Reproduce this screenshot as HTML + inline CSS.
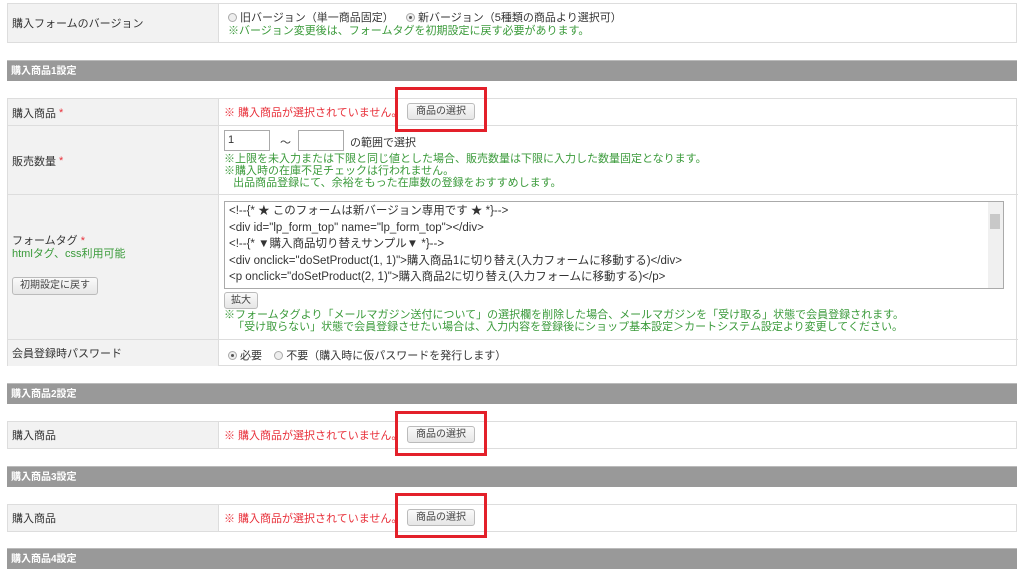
<!DOCTYPE html>
<html><head><meta charset="utf-8"><style>
*{margin:0;padding:0;box-sizing:border-box}
body{width:1024px;height:578px;background:#fff;font-family:"Liberation Sans","Noto Sans CJK JP",sans-serif;font-size:11px;color:#333;position:relative;overflow:hidden}
.a{position:absolute}
.row{position:absolute;left:7px;width:1010px;border:1px solid #ddd;background:#fff}
.lab{position:absolute;left:0;top:0;bottom:0;width:211px;background:#f2f2f2;border-right:1px solid #ddd;padding-left:4px;display:flex;align-items:center}
.sec{position:absolute;left:7px;width:1010px;height:21px;background:#999;color:#fff;font-weight:bold;font-size:10px;padding-left:4px;line-height:21px;border-top:1px solid #bbb}
.g{color:#3a9a3a}
.r{color:#e8303a}
.req{color:#e8303a}
.btn{position:absolute;border:1px solid #bbb;border-radius:3px;background:linear-gradient(#fafafa,#e6e6e6);font-size:10px;color:#444;text-align:center;line-height:15px}
.box{position:absolute;border:3px solid #e3202a}
.rad{display:inline-block;width:9px;height:9px;border:1px solid #aaa;border-radius:50%;background:#eee;vertical-align:-1px;margin-right:3px;position:relative}
.rad.on::after{content:"";position:absolute;left:2px;top:2px;width:3px;height:3px;border-radius:50%;background:#555}
.hl{position:absolute;left:0;width:1010px;height:1px;background:#ddd}
</style></head><body>

<div class="row" style="top:3px;height:40px"><div class="lab">購入フォームのバージョン</div>
<div class="a" style="left:220px;top:8px;line-height:13px"><span class="rad"></span>旧バージョン（単一商品固定）&nbsp;&nbsp;&nbsp;&nbsp;<span class="rad on"></span>新バージョン（5種類の商品より選択可）<br><span class="g">※バージョン変更後は、フォームタグを初期設定に戻す必要があります。</span></div></div>

<div class="sec" style="top:60px">購入商品1設定</div>

<div class="row" style="top:98px;height:268px">
<div class="lab" style="height:27px;bottom:auto;align-items:center">購入商品 <span class="req">&nbsp;*</span></div>
<div class="lab" style="top:27px;height:69px;bottom:auto">販売数量 <span class="req">&nbsp;*</span></div>
<div class="lab" style="top:96px;height:145px;bottom:auto;display:block;padding-top:40px;line-height:13px">フォームタグ <span class="req">*</span><br><span class="g">htmlタグ、css利用可能</span></div>
<div class="lab" style="top:241px;height:26px;bottom:auto">会員登録時パスワード</div>
<div class="hl" style="top:26px"></div><div class="hl" style="top:95px"></div><div class="hl" style="top:240px"></div>
<div class="btn" style="left:4px;top:178px;width:86px;height:18px">初期設定に戻す</div>
<div class="a r" style="left:216px;top:5px">※ 購入商品が選択されていません。</div>
<div class="btn" style="left:399px;top:4px;width:68px;height:17px">商品の選択</div>
<div class="a" style="left:216px;top:31px;width:46px;height:21px;border:1px solid #aaa;padding:0 3px;line-height:19px">1</div>
<div class="a" style="left:272px;top:35px">～</div>
<div class="a" style="left:290px;top:31px;width:46px;height:21px;border:1px solid #aaa"></div>
<div class="a" style="left:342px;top:35px">の範囲で選択</div>
<div class="a g" style="left:216px;top:54px;line-height:12px">※上限を未入力または下限と同じ値とした場合、販売数量は下限に入力した数量固定となります。<br>※購入時の在庫不足チェックは行われません。<br>&nbsp;&nbsp;&nbsp;出品商品登録にて、余裕をもった在庫数の登録をおすすめします。</div>
<div class="a" style="left:216px;top:102px;width:780px;height:88px;border:1px solid #aaa;padding:1px 4px;line-height:16.6px;font-size:11.5px;overflow:hidden;white-space:nowrap">&lt;!--{* ★ このフォームは新バージョン専用です ★ *}--&gt;<br>&lt;div id="lp_form_top" name="lp_form_top"&gt;&lt;/div&gt;<br>&lt;!--{* ▼購入商品切り替えサンプル▼ *}--&gt;<br>&lt;div onclick="doSetProduct(1, 1)"&gt;購入商品1に切り替え(入力フォームに移動する)&lt;/div&gt;<br>&lt;p onclick="doSetProduct(2, 1)"&gt;購入商品2に切り替え(入力フォームに移動する)&lt;/p&gt;
<div class="a" style="right:0;top:0;width:15px;height:86px;background:#f0f0f0"><div class="a" style="left:2px;top:12px;width:10px;height:15px;background:#c8c8c8"></div></div></div>
<div class="btn" style="left:216px;top:193px;width:34px;height:17px">拡大</div>
<div class="a g" style="left:216px;top:210px;line-height:12px">※フォームタグより「メールマガジン送付について」の選択欄を削除した場合、メールマガジンを「受け取る」状態で会員登録されます。<br>&nbsp;&nbsp;&nbsp;「受け取らない」状態で会員登録させたい場合は、入力内容を登録後にショップ基本設定＞カートシステム設定より変更してください。</div>
<div class="a" style="left:220px;top:248px"><span class="rad on"></span>必要&nbsp;&nbsp;&nbsp;&nbsp;<span class="rad"></span>不要（購入時に仮パスワードを発行します）</div>
</div>

<div class="sec" style="top:383px">購入商品2設定</div>
<div class="row" style="top:421px;height:28px"><div class="lab">購入商品</div>
<div class="a r" style="left:216px;top:5px">※ 購入商品が選択されていません。</div>
<div class="btn" style="left:399px;top:4px;width:68px;height:17px">商品の選択</div></div>

<div class="sec" style="top:466px">購入商品3設定</div>
<div class="row" style="top:504px;height:28px"><div class="lab">購入商品</div>
<div class="a r" style="left:216px;top:5px">※ 購入商品が選択されていません。</div>
<div class="btn" style="left:399px;top:4px;width:68px;height:17px">商品の選択</div></div>

<div class="sec" style="top:548px">購入商品4設定</div>

<div class="box" style="left:395px;top:87px;width:92px;height:45px"></div>
<div class="box" style="left:395px;top:411px;width:92px;height:45px"></div>
<div class="box" style="left:395px;top:493px;width:92px;height:45px"></div>
</body></html>
